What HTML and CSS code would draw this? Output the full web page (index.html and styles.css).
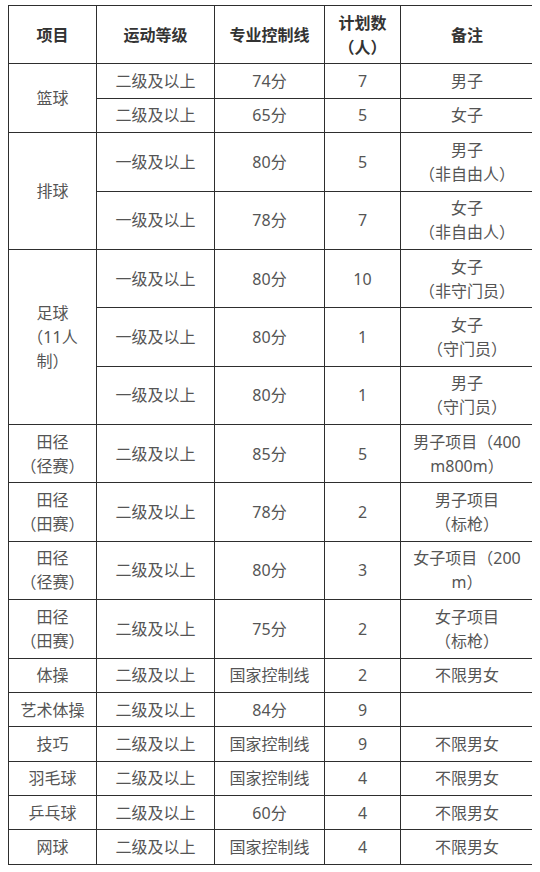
FILE: index.html
```html
<!DOCTYPE html>
<html lang="zh-CN">
<head>
<meta charset="utf-8">
<title>招生计划</title>
<link rel="stylesheet" href="styles.css">
</head>
<body>
<table class="plan">
  <colgroup>
    <col class="c1"><col class="c2"><col class="c3"><col class="c4"><col class="c5">
  </colgroup>
  <thead>
    <tr>
      <th>项目</th>
      <th>运动等级</th>
      <th>专业控制线</th>
      <th>计划数<br>（人）</th>
      <th>备注</th>
    </tr>
  </thead>
  <tbody>
    <tr><td rowspan="2">篮球</td><td>二级及以上</td><td>74分</td><td>7</td><td>男子</td></tr>
    <tr><td>二级及以上</td><td>65分</td><td>5</td><td>女子</td></tr>
    <tr class="dbl"><td rowspan="2">排球</td><td>一级及以上</td><td>80分</td><td>5</td><td>男子<br>（非自由人）</td></tr>
    <tr class="dbl"><td>一级及以上</td><td>78分</td><td>7</td><td>女子<br>（非自由人）</td></tr>
    <tr class="dbl"><td rowspan="3">足球<br>（11人<br>制）</td><td>一级及以上</td><td>80分</td><td>10</td><td>女子<br>（非守门员）</td></tr>
    <tr class="dbl"><td>一级及以上</td><td>80分</td><td>1</td><td>女子<br>（守门员）</td></tr>
    <tr class="dbl"><td>一级及以上</td><td>80分</td><td>1</td><td>男子<br>（守门员）</td></tr>
    <tr class="dbl"><td>田径<br>（径赛）</td><td>二级及以上</td><td>85分</td><td>5</td><td>男子项目（400<br>m800m）</td></tr>
    <tr class="dbl"><td>田径<br>（田赛）</td><td>二级及以上</td><td>78分</td><td>2</td><td>男子项目<br>（标枪）</td></tr>
    <tr class="dbl"><td>田径<br>（径赛）</td><td>二级及以上</td><td>80分</td><td>3</td><td>女子项目（200<br>m）</td></tr>
    <tr class="dbl"><td>田径<br>（田赛）</td><td>二级及以上</td><td>75分</td><td>2</td><td>女子项目<br>（标枪）</td></tr>
    <tr><td>体操</td><td>二级及以上</td><td>国家控制线</td><td>2</td><td>不限男女</td></tr>
    <tr><td>艺术体操</td><td>二级及以上</td><td>84分</td><td>9</td><td></td></tr>
    <tr><td>技巧</td><td>二级及以上</td><td>国家控制线</td><td>9</td><td>不限男女</td></tr>
    <tr><td>羽毛球</td><td>二级及以上</td><td>国家控制线</td><td>4</td><td>不限男女</td></tr>
    <tr><td>乒乓球</td><td>二级及以上</td><td>60分</td><td>4</td><td>不限男女</td></tr>
    <tr><td>网球</td><td>二级及以上</td><td>国家控制线</td><td>4</td><td>不限男女</td></tr>
  </tbody>
</table>
</body>
</html>
```

FILE: styles.css
```css
html, body {
  background: #ffffff;
}
body {
  margin: 5px 8px 0 8px;
  font-family: "Noto Sans", "Noto Sans CJK SC", sans-serif;
  font-size: 16px;
  color: #555555;
}
.plan {
  border-collapse: collapse;
  table-layout: fixed;
  width: 525px;
}
.c1 { width: 88px; }
.c2 { width: 118px; }
.c3 { width: 110px; }
.c4 { width: 76px; }
.c5 { width: 133px; }
.plan th,
.plan td {
  border: 1px solid #2e2e2e;
  text-align: center;
  vertical-align: middle;
  line-height: 24px;
  padding: 4.7px 2px;
  white-space: nowrap;
}
.plan th {
  font-weight: bold;
  color: #333333;
}
```
